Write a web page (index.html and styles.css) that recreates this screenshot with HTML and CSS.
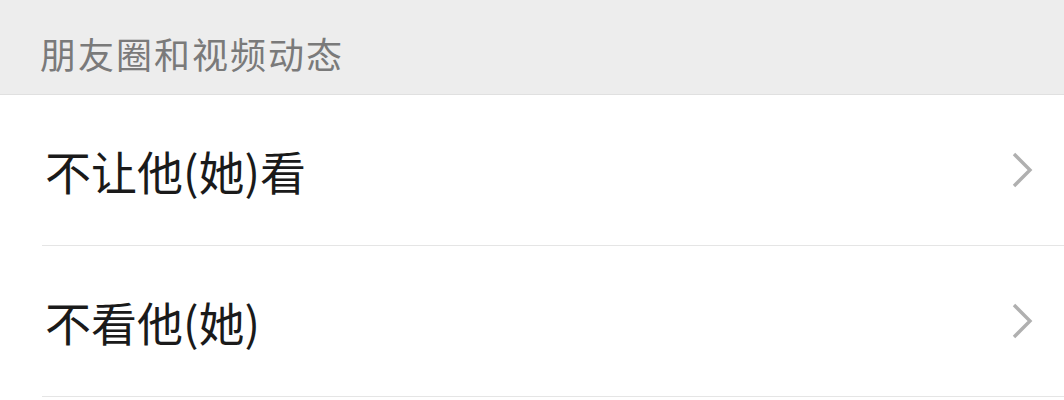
FILE: index.html
```html
<!DOCTYPE html>
<html lang="zh-CN">
<head>
<meta charset="utf-8">
<link rel="stylesheet" href="styles.css">
</head>
<body>
<div class="section-title">朋友圈和视频动态</div>
<ul class="list">
  <li class="item">
    <span class="label">不让他(她)看</span>
    <svg class="chev" width="22" height="38" viewBox="0 0 22 38"><path d="M3 3 L19 19 L3 35" fill="none" stroke="#b0b0b0" stroke-width="3.4"/></svg>
  </li>
  <li class="item">
    <span class="label">不看他(她)</span>
    <svg class="chev" width="22" height="38" viewBox="0 0 22 38"><path d="M3 3 L19 19 L3 35" fill="none" stroke="#b0b0b0" stroke-width="3.4"/></svg>
  </li>
</ul>
</body>
</html>
```

FILE: styles.css
```css
html, body {
  margin: 0;
  padding: 0;
  background: #ffffff;
  font-family: "Noto Sans CJK SC", "Noto Sans", sans-serif;
}
.section-title {
  box-sizing: content-box;
  height: 66px;
  padding-left: 40px;
  padding-top: 28px;
  font-size: 36px;
  line-height: 50px;
  letter-spacing: 2px;
  color: #7a7a7a;
  background: #ededed;
  border-bottom: 1px solid #e0e0e0;
}
.list {
  list-style: none;
  margin: 0;
  padding: 0 0 0 42px;
}
.item {
  height: 150px;
  display: flex;
  align-items: center;
  justify-content: space-between;
  border-bottom: 1px solid #e5e5e5;
  padding-left: 3px;
  padding-right: 31px;
}
.label {
  font-size: 46px;
  color: #1a1a1a;
}
.chev {
  display: block;
}
```
